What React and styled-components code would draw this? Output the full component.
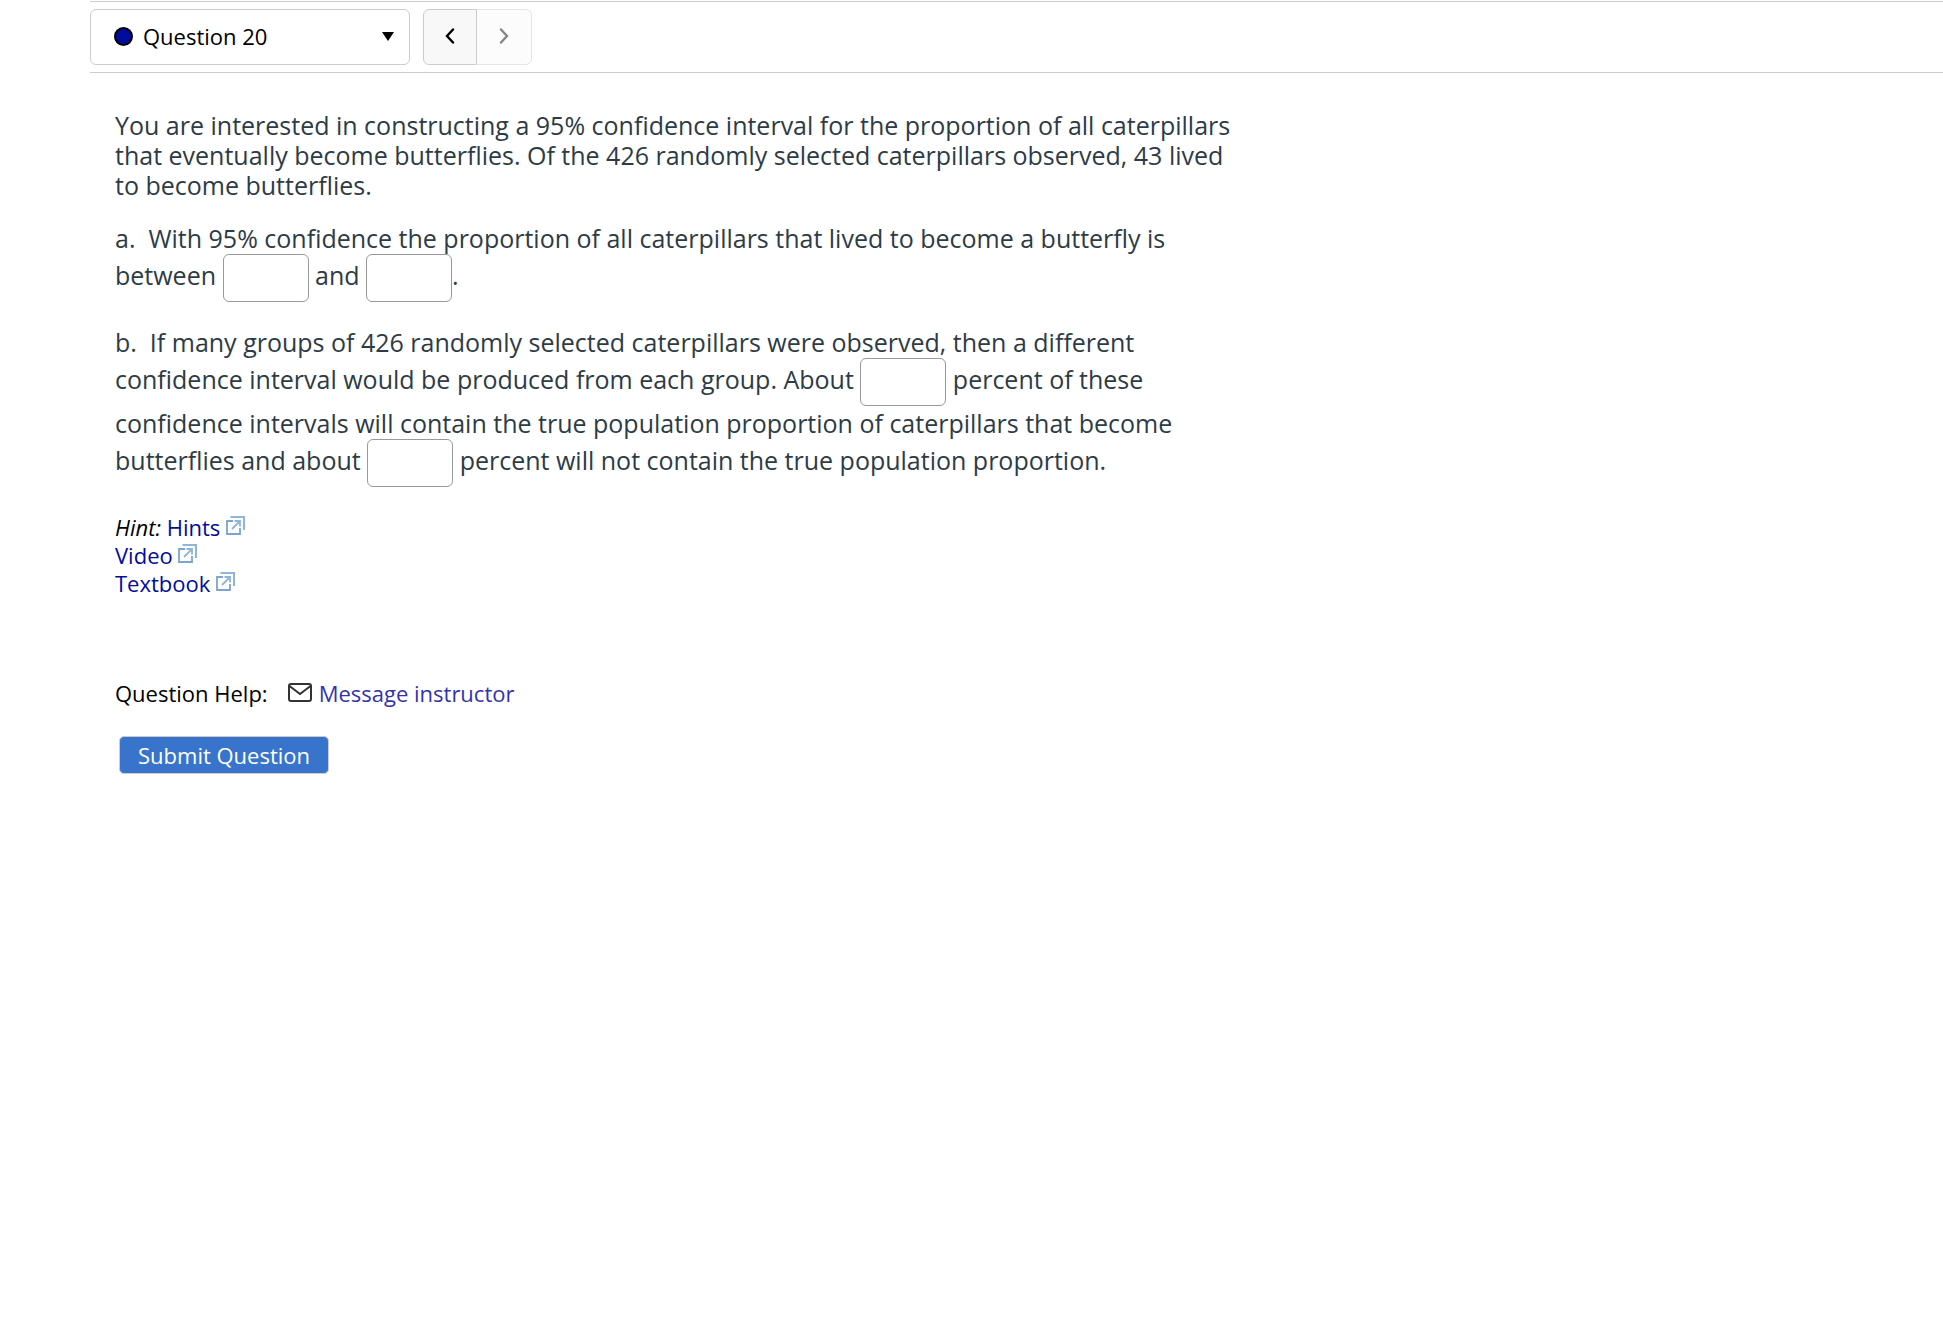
import React from "react";
import styled, { createGlobalStyle } from "styled-components";

const GlobalStyle = createGlobalStyle`
  *, *::before, *::after { box-sizing: border-box; }
  body {
    margin: 0;
    background: #fff;
    color: #000;
    font: 22px/28px "Trebuchet MS", "Open Sans", "Noto Sans", sans-serif;
  }
  button, input, select { font: inherit; color: inherit; }
`;

const Page = styled.div`
  padding: 1px 0 40px 90px;
`;

const Toolbar = styled.nav`
  display: flex;
  align-items: center;
  gap: 13px;
  height: 72px;
  border-top: 1px solid #ccc;
  border-bottom: 1px solid #ccc;
`;

const Picker = styled.label`
  display: flex;
  align-items: center;
  gap: 10px;
  width: 320px;
  height: 56px;
  padding: 0 15px 2px 23px;
  border: 1px solid #ccc;
  border-radius: 6px;
`;

const StatusDot = styled.span`
  width: 19px;
  height: 19px;
  border: 2px solid #000;
  border-radius: 50%;
  background: #000c9e;
`;

const PickerSelect = styled.select`
  flex: 1;
  min-width: 0;
  padding: 0;
  border: 0;
  background: none;
  appearance: none;
  outline: none;
`;

const Pager = styled.div`
  display: flex;
`;

const PagerButton = styled.button`
  display: grid;
  place-items: center;
  width: 54px;
  height: 56px;
  padding: 0 0 2px;
  border: 1px solid #ccc;
  border-radius: 6px 0 0 6px;
  background: #f8f8f8;

  & + & { width: 55px; border-left: 0; border-radius: 0 6px 6px 0; }
  &:disabled { border-color: #e6e6e6; background: #fcfcfc; color: #858585; }
`;

const Content = styled.main`
  max-width: 1160px;
  padding: 37px 0 0 25px;
`;

const Prompt = styled.p`
  margin: 0 0 23px;
  color: #2d3b45;
  font-size: 25px;
  line-height: 30px;
`;

const Blank = styled.input`
  width: 86px;
  height: 48px;
  margin: 1px 0 2px;
  padding: 4px 8px;
  border: 1px solid #999;
  border-radius: 6px;
  background: #fff;
  vertical-align: middle;
`;

const Hints = styled.div`
  padding-top: 1px;
  margin-bottom: 82px;
`;

const Link = styled.a`
  color: ${({ $soft }) => ($soft ? "#3333aa" : "#000c9c")};
  text-decoration: none;
`;

const LinkIcon = styled.svg`
  vertical-align: 1px;
`;

const HelpRow = styled.div`
  display: flex;
  align-items: center;
  margin-bottom: 29px;
`;

const MailIcon = styled.svg`
  margin: 0 7px 0 20px;
`;

const SubmitButton = styled.button`
  height: 38px;
  margin-left: 4px;
  padding: 0 18px;
  border: 1px solid #ccc;
  border-radius: 5px;
  background: #3874cb;
  color: #fff;
`;

function Chevron({ d }) {
  return (
    <svg width="10" height="16" viewBox="0 0 10 16" fill="none" stroke="currentColor" strokeWidth="2.4" strokeLinecap="round" aria-hidden="true">
      <path d={d} />
    </svg>
  );
}

function ExternalIcon() {
  return (
    <LinkIcon width="19" height="19" viewBox="0 0 19 19" fill="none" aria-hidden="true">
      <path d="M4.5 1H18V14" stroke="#8fb5d8" strokeWidth="2" />
      <path d="M7 5H1V18H14V12" stroke="#7ba5cf" strokeWidth="1.8" />
      <path d="M6 13L13 6M8.5 5H14V10.5" stroke="#8fb5d8" strokeWidth="1.8" />
    </LinkIcon>
  );
}

function Resource({ children }) {
  return (
    <Link href="#">
      {children} <ExternalIcon />
    </Link>
  );
}

export default function App() {
  return (
    <>
      <GlobalStyle />
      <Page>
        <Toolbar aria-label="Question navigation">
          <Picker>
            <StatusDot />
            <PickerSelect aria-label="Question" defaultValue="20">
              <option value="20">Question 20</option>
            </PickerSelect>
            <svg width="12" height="9" viewBox="0 0 12 9" aria-hidden="true">
              <path d="M0 0H12L6 9Z" />
            </svg>
          </Picker>
          <Pager>
            <PagerButton type="button" aria-label="Previous question">
              <Chevron d="M8 1.5L2 8L8 14.5" />
            </PagerButton>
            <PagerButton type="button" aria-label="Next question" disabled>
              <Chevron d="M2 1.5L8 8L2 14.5" />
            </PagerButton>
          </Pager>
        </Toolbar>
        <Content>
          <Prompt>
            You are interested in constructing a 95% confidence interval for the proportion of all caterpillars
            <br />
            that eventually become butterflies. Of the 426 randomly selected caterpillars observed, 43 lived
            <br />
            to become butterflies.
          </Prompt>
          <Prompt>
            a.&nbsp; With 95% confidence the proportion of all caterpillars that lived to become a butterfly is
            <br />
            between <Blank aria-label="Lower bound" /> and <Blank aria-label="Upper bound" />.
          </Prompt>
          <Prompt>
            b.&nbsp; If many groups of 426 randomly selected caterpillars were observed, then a different
            <br />
            confidence interval would be produced from each group. About{" "}
            <Blank aria-label="Percent containing the proportion" /> percent of these
            <br />
            confidence intervals will contain the true population proportion of caterpillars that become
            <br />
            butterflies and about <Blank aria-label="Percent not containing the proportion" /> percent will not
            contain the true population proportion.
          </Prompt>
          <Hints>
            <em>Hint:</em> <Resource>Hints</Resource>
            <br />
            <Resource>Video</Resource>
            <br />
            <Resource>Textbook</Resource>
          </Hints>
          <HelpRow>
            Question Help:
            <MailIcon width="24" height="20" viewBox="0 0 24 20" fill="none" stroke="#333" strokeWidth="2" aria-hidden="true">
              <rect x="1" y="1" width="22" height="17" rx="2" />
              <path d="M1.5 3L12 11L22.5 3" />
            </MailIcon>
            <Link href="#" $soft>Message instructor</Link>
          </HelpRow>
          <SubmitButton type="button">Submit Question</SubmitButton>
        </Content>
      </Page>
    </>
  );
}
